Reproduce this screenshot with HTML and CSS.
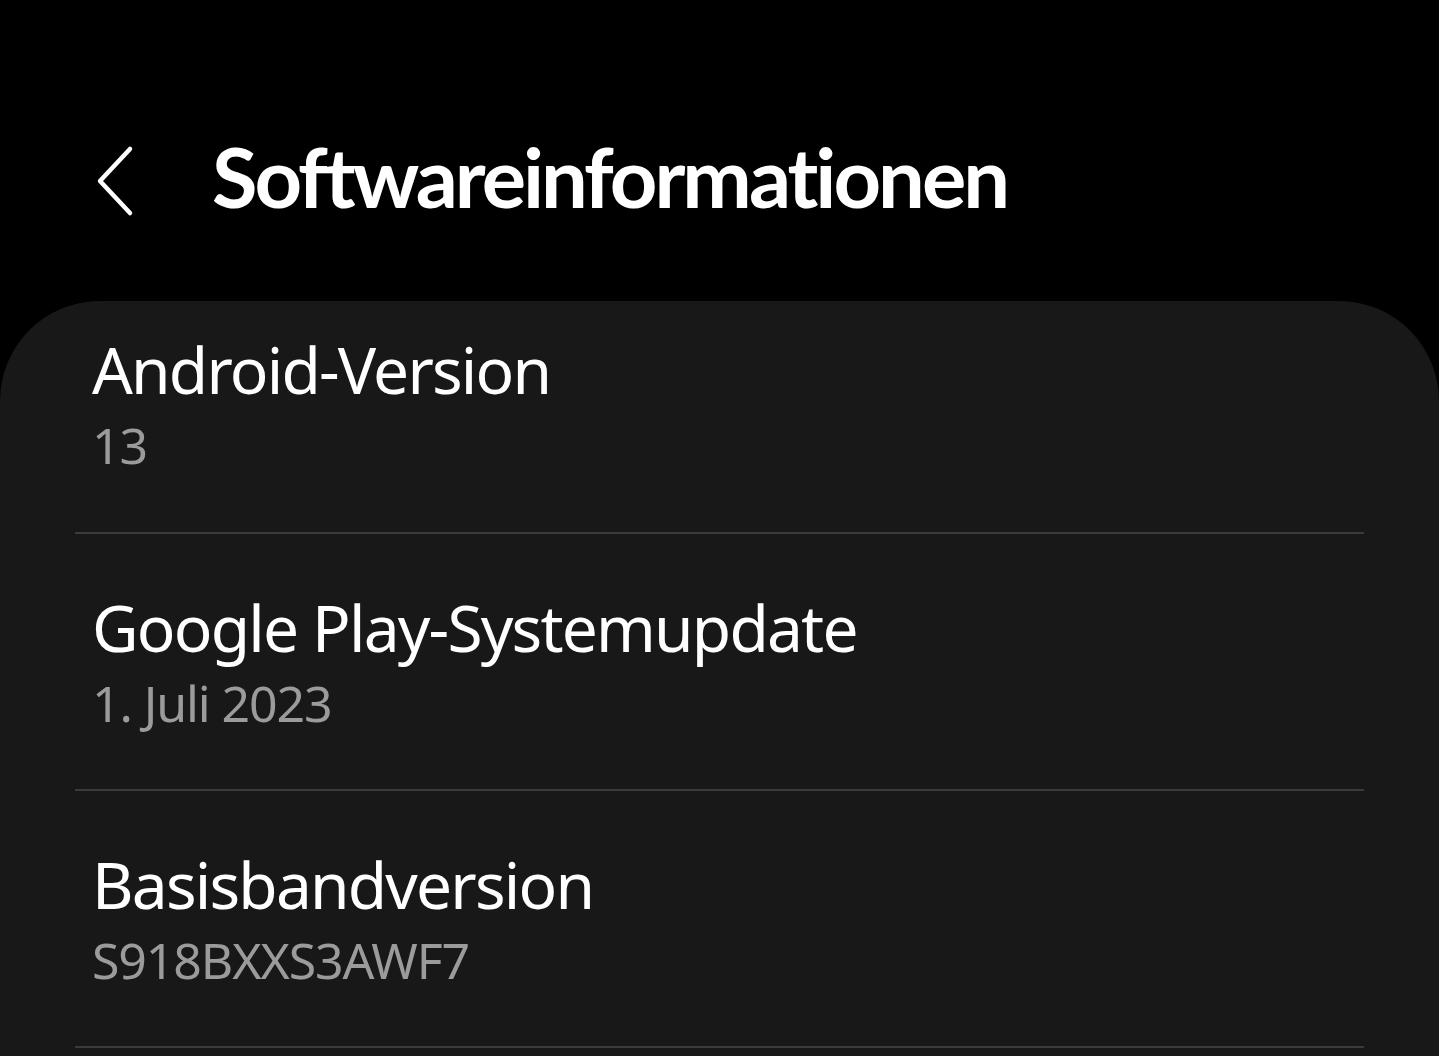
FILE: index.html
```html
<!DOCTYPE html>
<html lang="de">
<head>
<meta charset="utf-8">
<link rel="stylesheet" href="styles.css">
</head>
<body>
<div class="screen">
  <header class="appbar">
    <svg class="back" width="44" height="72" viewBox="0 0 44 72"><path d="M36 4 L6 36 L36 68" fill="none" stroke="#fff" stroke-width="4.5" stroke-linecap="round" stroke-linejoin="round"/></svg>
    <h1 class="title">Softwareinformationen</h1>
  </header>
  <main class="card">
    <div class="row first">
      <div class="row-title">Android-Version</div>
      <div class="row-sub">13</div>
    </div>
    <div class="row">
      <div class="row-title">Google Play-Systemupdate</div>
      <div class="row-sub">1. Juli 2023</div>
    </div>
    <div class="row">
      <div class="row-title">Basisbandversion</div>
      <div class="row-sub">S918BXXS3AWF7</div>
    </div>
  </main>
</div>
</body>
</html>
```
FILE: styles.css
```css
html, body {
  margin: 0;
  padding: 0;
  background: #000;
}
.screen {
  width: 1439px;
  height: 1056px;
  overflow: hidden;
  font-family: "Noto Sans", "Open Sans", sans-serif;
  color: #fff;
}
.appbar {
  height: 301px;
  display: flex;
  align-items: flex-start;
  padding-left: 94px;
  box-sizing: border-box;
}
.back {
  margin-top: 145px;
  flex: none;
}
.title {
  margin: 0;
  margin-left: 74px;
  margin-top: 135px;
  font-family: "Lato", "Noto Sans", sans-serif;
  font-size: 83px;
  font-weight: 700;
  letter-spacing: -3px;
  line-height: 1;
}
.card {
  background: #181818;
  border-radius: 100px 100px 0 0;
  padding: 0 75px;
  height: 755px;
}
.row {
  border-bottom: 2px solid #3b3b3b;
  height: 255px;
  box-sizing: content-box;
  padding-left: 17px;
  display: flex;
  flex-direction: column;
  justify-content: flex-start;
}
.row.first {
  height: 231px;
}
.row-title {
  font-size: 64px;
  line-height: 1;
  margin-top: 62px;
  letter-spacing: -1.8px;
}
.row.first .row-title {
  margin-top: 37px;
}
.row-sub {
  font-size: 50px;
  line-height: 1;
  color: #9b9b9b;
  margin-top: 18px;
  letter-spacing: -1.1px;
}
```
